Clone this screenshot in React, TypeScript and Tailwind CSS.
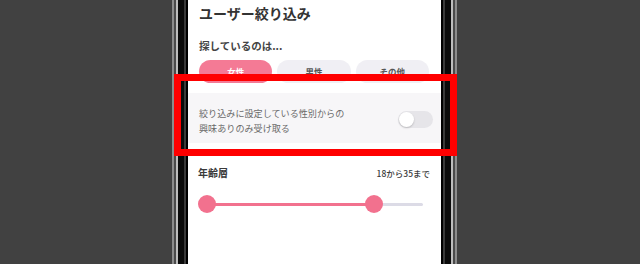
import React from 'react';

const jp = { fontFamily: '"Noto Sans CJK JP", "Noto Sans", sans-serif' };

const genders = ['女性', '男性', 'その他'];

const AgeSlider: React.FC<{ min: number; max: number; from: number; to: number }> = ({ min, max, from, to }) => {
  const a = ((from - min) / (max - min)) * 100;
  const b = ((to - min) / (max - min)) * 100;
  return (
    <div className="relative mx-[9px] mr-[8px] h-[18px] flex items-center">
      <div className="h-[3px] w-full rounded-full bg-[#dcdbe6]" />
      <div
        className="absolute h-[3px] bg-[#f2718e]"
        style={{ left: `${a}%`, width: `${b - a}%` }}
      />
      <div
        className="absolute top-0 -ml-[9px] h-[18px] w-[18px] rounded-full bg-[#f2718e]"
        style={{ left: `${a}%` }}
      />
      <div
        className="absolute top-0 -ml-[9px] h-[18px] w-[18px] rounded-full bg-[#f2718e]"
        style={{ left: `${b}%` }}
      />
    </div>
  );
};

export default function App() {
  return (
    <div className="relative w-[640px] h-[264px] overflow-hidden bg-[#414141]" style={jp}>
      {/* phone frame */}
      <div className="ml-[172px] w-[285px] h-[264px] border-x-[2px] border-[#8c8c8c]">
        <div className="h-full border-x-[2px] border-[#4a4a4a]">
          <div className="h-full border-x-[2px] border-[#bdbdbd]">
            <div className="h-full border-x-[6px] border-[#0b0b0b]">
              <div className="h-full border-x-[2px] border-[#3a3a3a]">
                <div className="h-full border-x-[2px] border-black">
                  {/* screen */}
                  <div className="h-full bg-white">
                    <div className="px-[11px] pt-[3px]">
                      <h1 className="text-[14px] leading-[20px] font-bold text-[#333]">ユーザー絞り込み</h1>
                      <p className="mt-[15px] text-[10.5px] leading-[16px] font-bold text-[#444]">探しているのは...</p>
                      <div className="mt-[6px] grid grid-cols-3 gap-[5px] pr-[1px]">
                        {genders.map((g, i) => (
                          <div
                            key={g}
                            className={`h-[23px] rounded-full flex items-center justify-center text-[8.5px] font-bold ${
                              i === 0 ? 'bg-[#f47a95] text-white' : 'bg-[#f0eff4] text-[#555]'
                            }`}
                          >
                            {g}
                          </div>
                        ))}
                      </div>
                    </div>

                    <div className="mt-[10px] bg-[#f7f6f8] pl-[11px] pr-[8px] pt-[13px] pb-[7px] flex items-center justify-between">
                      <p className="text-[9.1px] leading-[15px] text-[#6a6a6a]">
                        絞り込みに設定している性別からの
                        <br />
                        興味ありのみ受け取る
                      </p>
                      <div className="mb-[4px] h-[17px] w-[35px] rounded-full bg-[#e6e5e9] p-[1px]">
                        <div className="h-[15px] w-[15px] rounded-full bg-white shadow-[0_1px_2px_rgba(0,0,0,0.2)]" />
                      </div>
                    </div>

                    <div className="px-[10px] pt-[23px]">
                      <div className="flex items-center justify-between">
                        <span className="text-[10px] leading-[14px] font-bold text-[#3a3a3a]">年齢層</span>
                        <span className="mr-[1px] text-[8.5px] leading-[14px] font-medium text-[#3a3a3a]">18から35まで</span>
                      </div>
                      <div className="mt-[15px]">
                        <AgeSlider min={18} max={40} from={18} to={35} />
                      </div>
                    </div>
                  </div>
                </div>
              </div>
            </div>
          </div>
        </div>
      </div>

      {/* annotation box */}
      <div className="absolute left-[174px] top-[74px] w-[283px] h-[82px] border-[7px] border-[#ff0000]" />
    </div>
  );
}
